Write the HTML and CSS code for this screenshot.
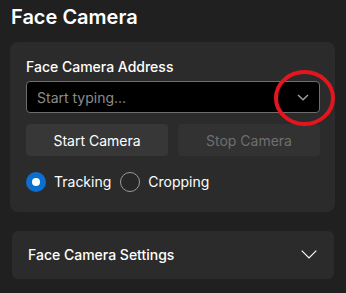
FILE: index.html
```html
<!DOCTYPE html>
<html>
<head>
<meta charset="utf-8">
<link rel="stylesheet" href="styles.css">
</head>
<body>
<div class="page">
  <h1 class="title">Face Camera</h1>
  <section class="card">
    <div class="label">Face Camera Address</div>
    <div class="combo">
      <span class="placeholder">Start typing...</span>
      <svg class="combo-chev" width="12" height="7" viewBox="0 0 12 7"><path d="M1 1 L6 5.8 L11 1" fill="none" stroke="#a0a0a0" stroke-width="1.4"/></svg>
    </div>
    <div class="buttons">
      <div class="btn">Start Camera</div>
      <div class="btn disabled">Stop Camera</div>
    </div>
    <div class="radios">
      <div class="radio"><span class="dot checked"></span><span class="rlabel">Tracking</span></div>
      <div class="radio"><span class="dot"></span><span class="rlabel">Cropping</span></div>
    </div>
  </section>
  <section class="expander">
    <span class="exp-title">Face Camera Settings</span>
    <svg class="exp-chev" width="16" height="9" viewBox="0 0 16 9"><path d="M0.7 0.7 L8 8 L15.3 0.7" fill="none" stroke="#ffffff" stroke-width="1.1"/></svg>
  </section>
</div>
<svg class="annot" width="61" height="56" viewBox="0 0 61 56"><ellipse cx="30.5" cy="28" rx="28.5" ry="26" fill="none" stroke="#e3161f" stroke-width="4"/></svg>
</body>
</html>
```

FILE: styles.css
```css
html, body {
  margin: 0;
  padding: 0;
  background: #202020;
}
body {
  width: 346px;
  height: 293px;
  overflow: hidden;
  position: relative;
  font-family: Inter, "Noto Sans", sans-serif;
  color: #ffffff;
}
.page {
  padding-top: 3px;
}
.title {
  margin: 0 0 11px 11px;
  font-size: 20px;
  line-height: 28px;
  font-weight: 600;
  color: #ffffff;
}
.card {
  margin-left: 10px;
  width: 325px;
  box-sizing: border-box;
  background: #2b2b2b;
  border-radius: 8px;
  padding: 15px 15px 20px 16px;
}
.label {
  font-size: 14px;
  line-height: 20px;
  font-weight: 500;
  margin-bottom: 4px;
}
.combo {
  height: 32px;
  box-sizing: border-box;
  background: #000000;
  border: 1px solid #6e6e6e;
  border-radius: 4px;
  display: flex;
  align-items: center;
  justify-content: space-between;
  padding: 0 10px 0 10px;
}
.placeholder {
  font-size: 14px;
  color: #8c8c8c;
}
.combo-chev {
  display: block;
  margin-top: 1px;
}
.buttons {
  margin-top: 11px;
  display: grid;
  grid-template-columns: 1fr 1fr;
  gap: 10px;
}
.btn {
  height: 32px;
  border-radius: 4px;
  background: #373737;
  display: flex;
  align-items: center;
  justify-content: center;
  font-size: 14px;
  color: #ffffff;
}
.btn.disabled {
  background: #323232;
  color: #6f6f6f;
}
.radios {
  margin-top: 15.5px;
  display: flex;
  gap: 9px;
  height: 20px;
}
.radio {
  display: flex;
  align-items: center;
  gap: 8px;
}
.dot {
  width: 20px;
  height: 20px;
  box-sizing: border-box;
  border-radius: 50%;
  border: 1px solid #9a9a9a;
  background: #272727;
  display: flex;
  align-items: center;
  justify-content: center;
}
.dot.checked {
  border: none;
  background: #0b6fd0;
}
.dot.checked::after {
  content: "";
  width: 8px;
  height: 8px;
  border-radius: 50%;
  background: #ffffff;
}
.rlabel {
  font-size: 14px;
  line-height: 20px;
}
.expander {
  margin: 19px 0 0 12px;
  width: 322px;
  height: 48px;
  box-sizing: border-box;
  background: #2b2b2b;
  border-radius: 6px;
  display: flex;
  align-items: center;
  justify-content: space-between;
  padding: 0 17px 0 16px;
}
.exp-title {
  font-size: 14px;
  font-weight: 500;
}
.exp-chev {
  display: block;
}
.annot {
  position: absolute;
  left: 274px;
  top: 70px;
}
```
